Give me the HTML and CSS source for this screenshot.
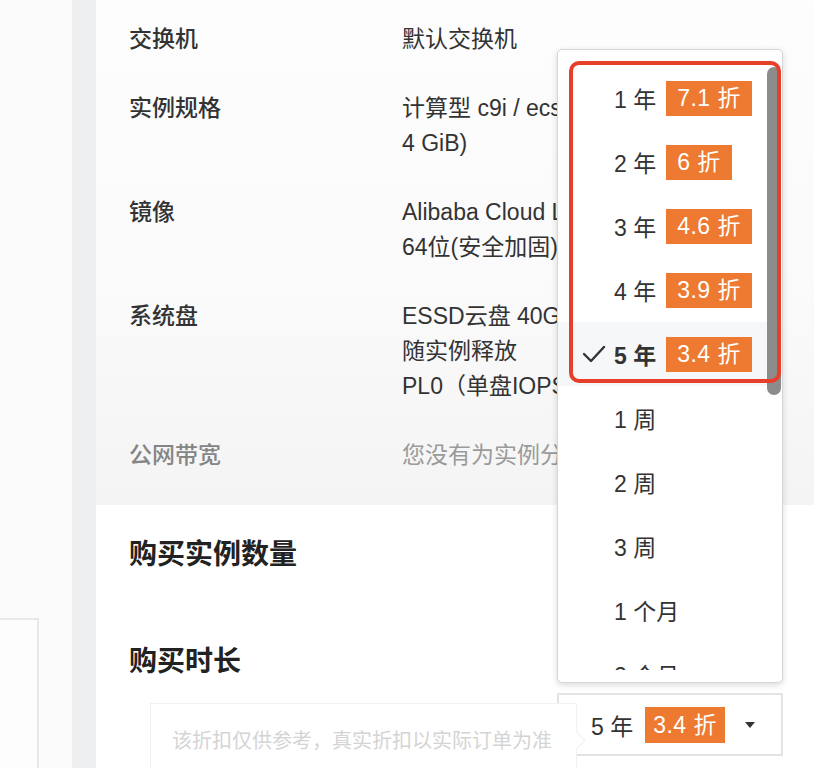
FILE: index.html
```html
<!DOCTYPE html>
<html lang="zh-CN">
<head>
  <meta charset="UTF-8">
  <meta name="viewport" content="width=device-width, initial-scale=1.0">
  <title>购买时长</title>
  <link rel="stylesheet" href="styles.css">
</head>
<body>
  <div class="page">
    <aside class="sidebar">
      <div class="side-card"></div>
    </aside>
    <div class="divider"></div>

    <main class="main">
      <!-- 配置摘要 -->
      <section class="summary">
        <div class="spec-row">
          <div class="spec-label">交换机</div>
          <div class="spec-value">默认交换机</div>
        </div>
        <div class="spec-row">
          <div class="spec-label">实例规格</div>
          <div class="spec-value">计算型 c9i / ecs.c9i.large（2 vCPU<br>4 GiB)</div>
        </div>
        <div class="spec-row">
          <div class="spec-label">镜像</div>
          <div class="spec-value">Alibaba Cloud Linux 3.2104 LTS<br>64位(安全加固)</div>
        </div>
        <div class="spec-row">
          <div class="spec-label">系统盘</div>
          <div class="spec-value">ESSD云盘 40GiB<br>随实例释放<br>PL0（单盘IOPS性能上限1万）</div>
        </div>
        <div class="spec-row muted">
          <div class="spec-label">公网带宽</div>
          <div class="spec-value">您没有为实例分配公网IP</div>
        </div>
      </section>

      <section class="field">
        <h3 class="field-title">购买实例数量</h3>
      </section>

      <section class="field duration">
        <h3 class="field-title">购买时长</h3>
        <div class="duration-body">
          <div class="select-wrap">
            <div class="select">
              <span>5 年</span>
              <span class="tag">3.4 折</span>
              <span class="caret"></span>
            </div>

            <div class="tip">该折扣仅供参考，真实折扣以实际订单为准</div>

            <!-- 下拉选项 -->
            <div class="dropdown">
              <ul class="options">
                <li class="option">1 年<span class="tag">7.1 折</span></li>
                <li class="option">2 年<span class="tag">6 折</span></li>
                <li class="option">3 年<span class="tag">4.6 折</span></li>
                <li class="option">4 年<span class="tag">3.9 折</span></li>
                <li class="option selected">
                  <svg class="check" width="24" height="18" viewBox="0 0 24 18"><polyline points="2,9 9,16 22,2" fill="none" stroke="#333" stroke-width="2.4" stroke-linecap="round" stroke-linejoin="round"/></svg>
                  5 年<span class="tag">3.4 折</span>
                </li>
                <li class="option">1 周</li>
                <li class="option">2 周</li>
                <li class="option">3 周</li>
                <li class="option">1 个月</li>
                <li class="option">2 个月</li>
              </ul>
              <div class="scrollbar"></div>
              <div class="highlight"></div>
            </div>
          </div>
        </div>
      </section>
    </main>
  </div>
</body>
</html>
```

FILE: styles.css
```css
* {
  box-sizing: border-box;
}

body {
  margin: 0;
  height: 100vh;
  overflow: hidden;
  font-family: "Liberation Sans", "Noto Sans CJK SC", sans-serif;
  color: #333;
  background: #fbfbfb;
}

.page {
  display: grid;
  grid-template-columns: 72px 24px 1fr;
  height: 100vh;
  overflow: hidden;
}

.sidebar {
  background: #fbfbfb;
  padding-top: 618px;
}

.side-card {
  width: 39px;
  height: 150px;
  border: 2px solid #e8e8e8;
  border-left: none;
  border-bottom: none;
  background: #fdfdfd;
}

.divider {
  background: #edeff1;
}

.main {
  background: #fff;
  min-width: 0;
}

/* 配置摘要 */
.summary {
  background: linear-gradient(#fdfdfd, #fafafa 60%, #f4f4f4);
  padding: 22px 0 32px 33px;
}

.spec-row {
  display: flex;
  font-size: 23px;
  line-height: 35px;
}
.spec-row + .spec-row {
  margin-top: 34px;
}

.spec-label {
  width: 273px;
  flex-shrink: 0;
  font-weight: 500;
}

.spec-value {
  white-space: nowrap;
}

.muted .spec-label {
  color: #858585;
}
.muted .spec-value {
  color: #9a9a9a;
}

.field {
  padding: 30px 0 0 33px;
}

.field-title {
  margin: 0;
  font-size: 28px;
  font-weight: 700;
  line-height: 40px;
  color: #222;
}

.duration {
  padding-top: 67px;
}

.duration-body {
  margin-top: 11px;
  padding-left: 428px;
}

.select-wrap {
  position: relative;
  width: 226px;
}

.select {
  position: relative;
  z-index: 1;
  height: 63px;
  display: flex;
  align-items: center;
  padding-left: 32px;
  border: 2px solid #e3e3e3;
  font-size: 23px;
}

.select .tag {
  margin-left: 12px;
  padding: 0 8px;
  line-height: 36px;
}

.caret {
  margin-left: auto;
  margin-right: 26px;
  width: 0;
  height: 0;
  border-left: 5px solid transparent;
  border-right: 5px solid transparent;
  border-top: 6px solid #333;
}

.tag {
  display: inline-block;
  margin-left: 10px;
  padding: 0 11px;
  line-height: 35px;
  background: #ed7a30;
  color: #fff;
  font-weight: 400;
  letter-spacing: 0.5px;
}

/* 折扣提示 */
.tip {
  position: absolute;
  top: 10px;
  right: calc(100% - 20px);
  z-index: 2;
  width: 427px;
  height: 65px;
  padding: 22px 0 0 21px;
  border: 1px solid #f1f1f1;
  border-bottom: none;
  background: #fff;
  font-size: 20px;
  line-height: 30px;
  color: #d4d4d4;
  white-space: nowrap;
}
.tip::after {
  content: "";
  position: absolute;
  right: -7px;
  top: 30px;
  width: 12px;
  height: 12px;
  background: #fff;
  border-top: 1px solid #eee;
  border-right: 1px solid #eee;
  transform: rotate(45deg);
}

/* 下拉框 */
.dropdown {
  position: absolute;
  left: 0;
  bottom: calc(100% + 10px);
  z-index: 3;
  width: 226px;
  padding: 16px 0 12px;
  background: #fff;
  border: 1px solid #d6d6d6;
  border-radius: 5px;
  box-shadow: 0 2px 6px rgba(0, 0, 0, 0.15);
}

.options {
  height: 604px;
  margin: 0;
  padding: 0;
  list-style: none;
  overflow: hidden;
}

.option {
  position: relative;
  height: 64px;
  display: flex;
  align-items: center;
  padding-left: 56px;
  font-size: 23px;
  white-space: nowrap;
}

.option.selected {
  background: #f6f7f9;
  font-weight: 700;
}

.check {
  position: absolute;
  left: 24px;
  top: 23px;
}

.scrollbar {
  position: absolute;
  top: 17px;
  right: 1px;
  width: 14px;
  height: 328px;
  border-radius: 7px;
  background: #8c8c8c;
}

/* 红框标注 */
.highlight {
  position: absolute;
  top: 11px;
  left: 11px;
  width: 212px;
  height: 322px;
  border: 4px solid #e6402b;
  border-radius: 10px;
  pointer-events: none;
}
```
